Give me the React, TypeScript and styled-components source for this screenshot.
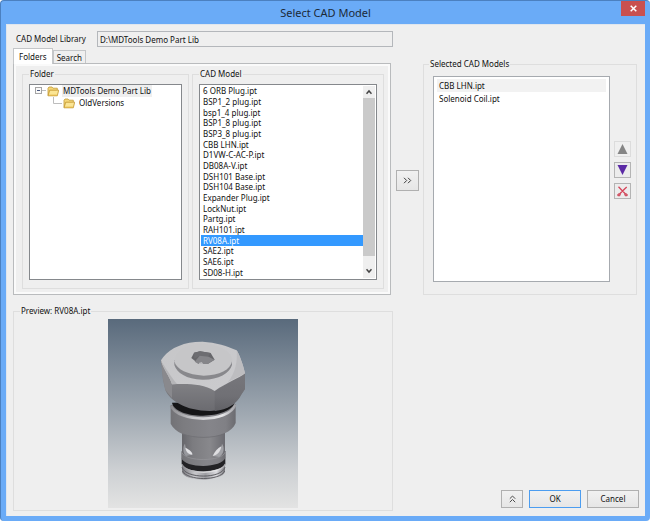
import React, { useState } from "react";
import styled, { createGlobalStyle, css } from "styled-components";

const GlobalStyle = createGlobalStyle`
  *, *::before, *::after { box-sizing: border-box; }
  body {
    margin: 0;
    background: #fff;
    color: #111;
    font: 8px/12px "Noto Sans", "Liberation Sans", Arial, sans-serif;
  }
  button, input { font: inherit; color: inherit; }
`;

const Window = styled.main`
  display: flex;
  flex-direction: column;
  min-height: 100vh;
  padding: 0 5px 5px;
  background: #6aabf7;
  border-top: 1px solid #4b80c0;
  border-left: 1px solid #4b80c0;
  border-radius: 4px;
`;

const TitleBar = styled.header`
  display: grid;
  grid-template-columns: 24px 1fr 24px;
  height: 23px;
`;

const Title = styled.h1`
  grid-column: 2;
  margin: 0;
  text-align: center;
  font: 11px/23px "Noto Sans", "Open Sans", sans-serif;
  color: #1c2a38;
`;

const CloseButton = styled.button`
  display: grid;
  place-items: center;
  height: 15px;
  padding: 0;
  border: 0;
  background: #c9504f;
`;

const Body = styled.div`
  flex: 1;
  display: grid;
  grid-template-columns: minmax(0, 380fr) 23px minmax(0, 217fr);
  grid-template-rows: auto 1fr;
  column-gap: 3px;
  row-gap: 10px;
  padding: 6px 6px 5px;
  background: #efefef;
  border: solid #dfe6ee;
  border-width: 1px 0 0 1px;
`;

const Library = styled.section`
  display: flex;
  flex-direction: column;
`;

const PathRow = styled.div`
  display: flex;
  align-items: center;
  margin-bottom: 1px;
`;

const PathLabel = styled.label`
  width: 84px;
  padding-left: 3px;
  line-height: 14px;
`;

const PathInput = styled.input`
  flex: 1;
  min-width: 0;
  height: 16px;
  padding: 0 2px;
  border: 1px solid #b4b7bb;
  background: #efefef;
`;

const Tabs = styled.div`
  display: flex;
  align-items: flex-end;
  height: 15px;
`;

const Tab = styled.button<{ $active: boolean }>`
  height: 13px;
  padding: 0 3px;
  border: 1px solid #c4c6c8;
  border-bottom: 0;
  background: #efefef;
  line-height: 13px;
  ${(p) =>
    p.$active &&
    css`
      height: 16px;
      padding: 0 5px;
      margin-bottom: -1px;
      background: #fff;
      line-height: 14px;
      z-index: 1;
    `}
`;

const TabPanel = styled.div`
  display: grid;
  grid-template-columns: minmax(0, 167fr) minmax(0, 192fr);
  gap: 3px;
  margin-right: 2px;
  padding: 4px 6px 5px 8px;
  border: 1px solid #b9bbbd;
  background: #efefef;
  box-shadow: inset 0 0 0 2px #fafafa;
`;

const Group = styled.fieldset`
  display: flex;
  flex-direction: column;
  min-width: 0;
  margin: 0;
  padding: 4px 6px 8px;
  border: 1px solid #dedede;
`;

const Legend = styled.legend`
  padding: 0 1px;
  line-height: 12px;
`;

const Tree = styled.ul`
  flex: 1;
  margin: 0;
  padding: 0 5px;
  list-style: none;
  border: 1px solid #85888c;
  background: #fff;
`;

const TreeItem = styled.li<{ $level: number }>`
  display: flex;
  align-items: center;
  height: 12px;
  padding-left: ${(p) => p.$level * 18}px;
  white-space: nowrap;
`;

const TreeLabel = styled.span<{ $selected?: boolean }>`
  margin-left: 3px;
  padding: 0 1px;
  background: ${(p) => (p.$selected ? "#efefef" : "transparent")};
`;

const ModelBox = styled.div`
  display: grid;
  grid-template-columns: minmax(0, 1fr) 12px;
  padding: 1px;
  border: 1px solid #85888c;
  background: #fff;
`;

const ModelList = styled.ul`
  display: grid;
  grid-auto-rows: 1fr;
  height: 192px;
  margin: 0;
  padding: 0;
  list-style: none;
`;

const ModelRow = styled.li<{ $selected: boolean }>`
  display: flex;
  align-items: center;
  min-height: 0;
  padding-left: 2px;
  line-height: 10px;
  white-space: nowrap;
  cursor: default;
  background: ${(p) => (p.$selected ? "#3399ff" : "transparent")};
  color: ${(p) => (p.$selected ? "#fff" : "inherit")};
`;

const ScrollBar = styled.div`
  display: grid;
  grid-template-rows: 12px 1fr 22px;
  background: #efefef;
`;

const ScrollButton = styled.button<{ $end?: boolean }>`
  display: grid;
  place-items: center;
  align-content: ${(p) => (p.$end ? "end" : "center")};
  padding: ${(p) => (p.$end ? "0 0 4px" : "0")};
  border: 0;
  background: transparent;
`;

const ScrollThumb = styled.div`
  background: #cacaca;
`;

const PushButton = styled.button<{ $primary?: boolean; $width: number }>`
  display: grid;
  place-items: center;
  width: ${(p) => p.$width}px;
  height: 18px;
  padding: 0;
  border: 1px solid ${(p) => (p.$primary ? "#4c9df0" : "#b0b0b0")};
  background: linear-gradient(#f1f1f1, #e6e6e6);
`;

const TransferButton = styled(PushButton)`
  align-self: start;
  height: 21px;
  margin-top: 139px;
`;

const SelectedGroup = styled(Group)`
  flex-direction: row;
  margin: 27px 2px 0 1px;
  padding: 6px 5px 12px;
`;

const SelectedLayout = styled.div`
  flex: 1;
  display: grid;
  grid-template-columns: minmax(0, 1fr) 17px;
  gap: 4px;
  padding-left: 4px;
`;

const SelectedList = styled.ul`
  margin: 0;
  padding: 2px 3px;
  list-style: none;
  border: 1px solid #a6aaaf;
  background: #fff;
`;

const SelectedRow = styled.li<{ $selected: boolean }>`
  height: 13px;
  padding-left: 2px;
  line-height: 13px;
  cursor: default;
  background: ${(p) => (p.$selected ? "#f2f2f2" : "transparent")};
`;

const IconColumn = styled.div`
  display: flex;
  flex-direction: column;
  gap: 5px;
  padding-top: 65px;
`;

const IconButton = styled.button`
  display: grid;
  place-items: center;
  width: 17px;
  height: 16px;
  padding: 0;
  border: 1px solid #b4b4b4;
  background: #ececec;
  &:disabled { border-color: #dcdcdc; background: #efefef; }
`;

const PreviewGroup = styled(Group)`
  align-items: center;
  padding: 2px 6px 1px;
`;

const ModelDrawing = styled.svg`
  display: block;
  width: 190px;
  height: auto;
`;

const Actions = styled.footer`
  grid-column: 2 / -1;
  display: flex;
  justify-content: flex-end;
  align-items: flex-end;
  gap: 6px;
  padding-bottom: 3px;
`;

const models = [
  "6 ORB Plug.ipt", "BSP1_2 plug.ipt", "bsp1_4 plug.ipt", "BSP1_8 plug.ipt",
  "BSP3_8 plug.ipt", "CBB LHN.ipt", "D1VW-C-AC-P.ipt", "DB08A-V.ipt",
  "DSH101 Base.ipt", "DSH104 Base.ipt", "Expander Plug.ipt", "LockNut.ipt",
  "Partg.ipt", "RAH101.ipt", "RV08A.ipt", "SAE2.ipt", "SAE6.ipt", "SD08-H.ipt",
];

const chosen = ["CBB LHN.ipt", "Solenoid Coil.ipt"];

const FolderIcon = () => (
  <svg width="12" height="11" viewBox="0 0 12 11" aria-hidden="true">
    <path d="M1 9.5V2.2L2 1h3l1 1.2h4.3V4" fill="#f5d77a" stroke="#c19a35" strokeWidth=".8" />
    <path d="M1 9.8 2.7 4.2h9L10.3 9.8z" fill="#fbe594" stroke="#c0932b" strokeWidth=".8" />
    <path d="M2.2 9.2h7.7" stroke="#e2b544" />
  </svg>
);

const Expander = () => (
  <svg width="12" height="12" viewBox="0 0 12 12" aria-hidden="true">
    <rect x=".5" y="2.5" width="6" height="6" fill="#fafafa" stroke="#a5a5a5" />
    <path d="M2 5.5h3" stroke="#4b5a80" />
    <path d="M7 5.5h4" stroke="#bdbdbd" />
  </svg>
);

const Branch = () => (
  <svg width="10" height="12" viewBox="0 0 10 12" aria-hidden="true">
    <path d="M.5 0v6.5H9" fill="none" stroke="#bdbdbd" />
  </svg>
);

const Chevron = ({ down }: { down?: boolean }) => (
  <svg width="6" height="6" viewBox="0 0 6 6" aria-hidden="true">
    <path d={down ? "M.5 1.2 3 4l2.5-2.8" : "M.5 4.8 3 2l2.5 2.8"} fill="none" stroke="#444" strokeWidth="1.5" />
  </svg>
);

const CartridgeValve = () => (
  <ModelDrawing viewBox="25 27 570 567" role="img" aria-label="RV08A.ipt">
    <defs>
      <linearGradient id="sky" x2="0" y2="1">
        <stop offset="0" stopColor="#596a7c" />
        <stop offset=".5" stopColor="#9fa8b1" />
        <stop offset=".8" stopColor="#cdd0d3" />
        <stop offset="1" stopColor="#e3e3e3" />
      </linearGradient>
      <linearGradient id="barrel">
        <stop offset="0" stopColor="#727276" />
        <stop offset=".2" stopColor="#7c7c80" />
        <stop offset=".6" stopColor="#85858a" />
        <stop offset=".85" stopColor="#808085" />
        <stop offset="1" stopColor="#6b6b70" />
      </linearGradient>
      <linearGradient id="neck">
        <stop offset="0" stopColor="#66666b" />
        <stop offset=".25" stopColor="#7c7c80" />
        <stop offset=".65" stopColor="#88888c" />
        <stop offset="1" stopColor="#6a6a70" />
      </linearGradient>
      <linearGradient id="steel">
        <stop offset="0" stopColor="#7b7b80" />
        <stop offset=".3" stopColor="#c8c8cc" />
        <stop offset=".55" stopColor="#9d9da2" />
        <stop offset=".8" stopColor="#dcdce0" />
        <stop offset="1" stopColor="#77777c" />
      </linearGradient>
      <linearGradient id="lip">
        <stop offset="0" stopColor="#8d8d91" />
        <stop offset=".35" stopColor="#c9c9cc" />
        <stop offset=".8" stopColor="#e6e6e8" />
        <stop offset="1" stopColor="#a1a1a6" />
      </linearGradient>
      <linearGradient id="face" x2="0" y2="1">
        <stop offset="0" stopColor="#8a8a8e" />
        <stop offset=".6" stopColor="#808084" />
        <stop offset="1" stopColor="#6b6b70" />
      </linearGradient>
      <linearGradient id="side" x2="0" y2="1">
        <stop offset="0" stopColor="#77777c" />
        <stop offset=".6" stopColor="#707075" />
        <stop offset="1" stopColor="#616166" />
      </linearGradient>
      <linearGradient id="top" x2="1" y2="1">
        <stop offset="0" stopColor="#c6c6c8" />
        <stop offset="1" stopColor="#cbcbce" />
      </linearGradient>
    </defs>
    <rect x="25" y="27" width="570" height="567" fill="url(#sky)" />

    <path d="M247 462V486C254 517 370 517 376 484V460z" fill="url(#steel)" />
    <path d="M247 472C258 507 365 507 376 472M249 483C262 513 362 513 375 483" fill="none" stroke="#5e5e63" strokeWidth="3" />
    <path d="M246 444V461C258 492 366 491 377 460V443z" fill="#222225" />
    <path d="M247 463C260 495 364 495 377 462" fill="none" stroke="url(#lip)" strokeWidth="4" />
    <path d="M245 424V443C254 476 368 476 378 442V423z" fill="url(#barrel)" />
    <path d="M247 356V426C258 455 367 455 376 425V356z" fill="url(#neck)" />
    <path d="M246 427C258 456 367 456 377 426" fill="none" stroke="#97979c" strokeWidth="2" />
    <path d="M256 401C249 407 249 431 259 438L278 434C263 426 258 416 256 401z" fill="#97989d" />
    <path d="M257 413C259 425 266 433 278 434C279 428 271 419 257 413z" fill="#e2e2e5" />
    <path d="M367 401C375 411 374 430 359 441L339 438C357 430 365 416 367 401z" fill="#a1a2a7" />
    <path d="M365 409C364 423 354 435 339 438C345 426 353 415 365 409z" fill="#dedee1" />

    <path d="M213 285V341C225 367 263 382 311 383C359 381 398 366 408 339V283z" fill="url(#barrel)" />
    <path d="M248 371C284 386 342 386 376 370" fill="none" stroke="#6b6b70" strokeWidth="2" />
    <path d="M214 287C234 338 388 340 407 284" fill="none" stroke="url(#lip)" strokeWidth="8" />
    <path d="M217 278C226 329 394 332 406 274z" fill="#161618" />

    <path d="M184 151 190 210 197 240C210 272 258 302 330 303C386 300 413 277 424 255L436 237V189L405 120L308 95z" fill="url(#face)" />
    <path d="M184 151 190 206 197 240 217 264V223z" fill="#89898d" />
    <path d="M345 243 436 190V237L424 255C411 282 384 299 345 303z" fill="url(#side)" />
    <path d="M184 151 191 141C213 112 258 94 309 95C347 97 386 109 411 121C420 135 431 167 436 190C421 204 382 217 345 243C310 220 257 221 217 223C211 201 191 177 184 151z" fill="url(#top)" />
    <path d="M411 121C420 135 431 167 436 190C421 200 400 207 384 217C408 190 414 150 411 121z" fill="#bdbdc0" />
    <path d="M184 153C191 177 211 201 217 223L232 222C212 198 196 170 184 153z" fill="#b5b5b8" />

    <path d="M224 151V165C231 188 260 208 308 209C355 210 390 190 397 165V151z" fill="#88888c" />
    <path d="M224 154C233 114 267 101 311 101C361 104 394 124 398 151C393 181 359 196 312 197C264 195 230 178 224 154z" fill="#c6c6c8" />
    <path d="M283 128 301 124 333 129 345 149 324 162 297 162 275 144z" fill="#66666a" />
    <path d="M283 128 301 124 333 129 322 143 301 137 284 146z" fill="#6d6d71" />
    <path d="M300 137 327 140 344 149 324 162 297 162 285 155z" fill="#858589" />
    <path d="M297 159 306 156 311 162H298z" fill="#b9b9bc" />
  </ModelDrawing>
);

export default function App() {
  const [tab, setTab] = useState("Folders");
  const [model, setModel] = useState("RV08A.ipt");
  const [picked, setPicked] = useState(chosen[0]);

  return (
    <>
      <GlobalStyle />
      <Window>
        <TitleBar>
          <Title>Select CAD Model</Title>
          <CloseButton aria-label="Close">
            <svg width="7" height="7" viewBox="0 0 7 7" aria-hidden="true">
              <path d="M.7.7l5.6 5.6M6.3.7.7 6.3" stroke="#fff" strokeWidth="1.5" />
            </svg>
          </CloseButton>
        </TitleBar>
        <Body>
          <Library>
            <PathRow>
              <PathLabel htmlFor="library-path">CAD Model Library</PathLabel>
              <PathInput id="library-path" readOnly value="D:\MDTools Demo Part Lib" />
            </PathRow>
            <Tabs role="tablist">
              {["Folders", "Search"].map((name) => (
                <Tab key={name} role="tab" aria-selected={tab === name} $active={tab === name} onClick={() => setTab(name)}>
                  {name}
                </Tab>
              ))}
            </Tabs>
            <TabPanel role="tabpanel">
              <Group>
                <Legend>Folder</Legend>
                <Tree role="tree">
                  <TreeItem role="treeitem" $level={0}>
                    <Expander />
                    <FolderIcon />
                    <TreeLabel $selected>MDTools Demo Part Lib</TreeLabel>
                  </TreeItem>
                  <TreeItem role="treeitem" $level={1}>
                    <Branch />
                    <FolderIcon />
                    <TreeLabel>OldVersions</TreeLabel>
                  </TreeItem>
                </Tree>
              </Group>
              <Group>
                <Legend>CAD Model</Legend>
                <ModelBox>
                  <ModelList role="listbox" aria-label="CAD Model">
                    {models.map((name) => (
                      <ModelRow key={name} role="option" aria-selected={name === model} $selected={name === model} onClick={() => setModel(name)}>
                        {name}
                      </ModelRow>
                    ))}
                  </ModelList>
                  <ScrollBar>
                    <ScrollButton aria-label="Scroll up"><Chevron /></ScrollButton>
                    <ScrollThumb />
                    <ScrollButton $end aria-label="Scroll down"><Chevron down /></ScrollButton>
                  </ScrollBar>
                </ModelBox>
              </Group>
            </TabPanel>
          </Library>

          <TransferButton $width={23} aria-label="Add to selected models">
            <svg width="9" height="7" viewBox="0 0 9 7" aria-hidden="true">
              <path d="M1 .8 3.7 3.5 1 6.2M5 .8l2.7 2.7L5 6.2" fill="none" stroke="#3c3c3c" />
            </svg>
          </TransferButton>

          <SelectedGroup>
            <Legend>Selected CAD Models</Legend>
            <SelectedLayout>
              <SelectedList role="listbox" aria-label="Selected CAD Models">
                {chosen.map((name) => (
                  <SelectedRow key={name} role="option" aria-selected={name === picked} $selected={name === picked} onClick={() => setPicked(name)}>
                    {name}
                  </SelectedRow>
                ))}
              </SelectedList>
              <IconColumn>
                <IconButton disabled aria-label="Move up">
                  <svg width="11" height="10" viewBox="0 0 11 10" aria-hidden="true">
                    <path d="M5.5 0 10.5 10H.5z" fill="#858585" />
                  </svg>
                </IconButton>
                <IconButton aria-label="Move down">
                  <svg width="11" height="10" viewBox="0 0 11 10" aria-hidden="true">
                    <path d="M.5 0h10l-5 10z" fill="#5b2aa5" />
                  </svg>
                </IconButton>
                <IconButton aria-label="Remove">
                  <svg width="11" height="11" viewBox="0 0 11 11" aria-hidden="true">
                    <path d="M1.5.8 5.5 5 9.7 1M5.5 5 2.6 8M5.5 5l3 3" fill="none" stroke="#d6455a" strokeWidth="1.3" />
                    <path d="M.8 9.7 1 8h2.2l-.4 1.8zM10.2 9.7 10 8H7.8l.4 1.8z" fill="#f3b9c0" stroke="#c8374b" />
                  </svg>
                </IconButton>
              </IconColumn>
            </SelectedLayout>
          </SelectedGroup>

          <PreviewGroup>
            <Legend>Preview: {model}</Legend>
            <CartridgeValve />
          </PreviewGroup>

          <Actions>
            <PushButton $width={22} aria-label="Collapse preview">
              <svg width="7" height="8" viewBox="0 0 7 8" aria-hidden="true">
                <path d="M.8 3.7 3.5 1l2.7 2.7M.8 7.2l2.7-2.7 2.7 2.7" fill="none" stroke="#4c4c4c" />
              </svg>
            </PushButton>
            <PushButton $width={52} $primary>OK</PushButton>
            <PushButton $width={52}>Cancel</PushButton>
          </Actions>
        </Body>
      </Window>
    </>
  );
}
